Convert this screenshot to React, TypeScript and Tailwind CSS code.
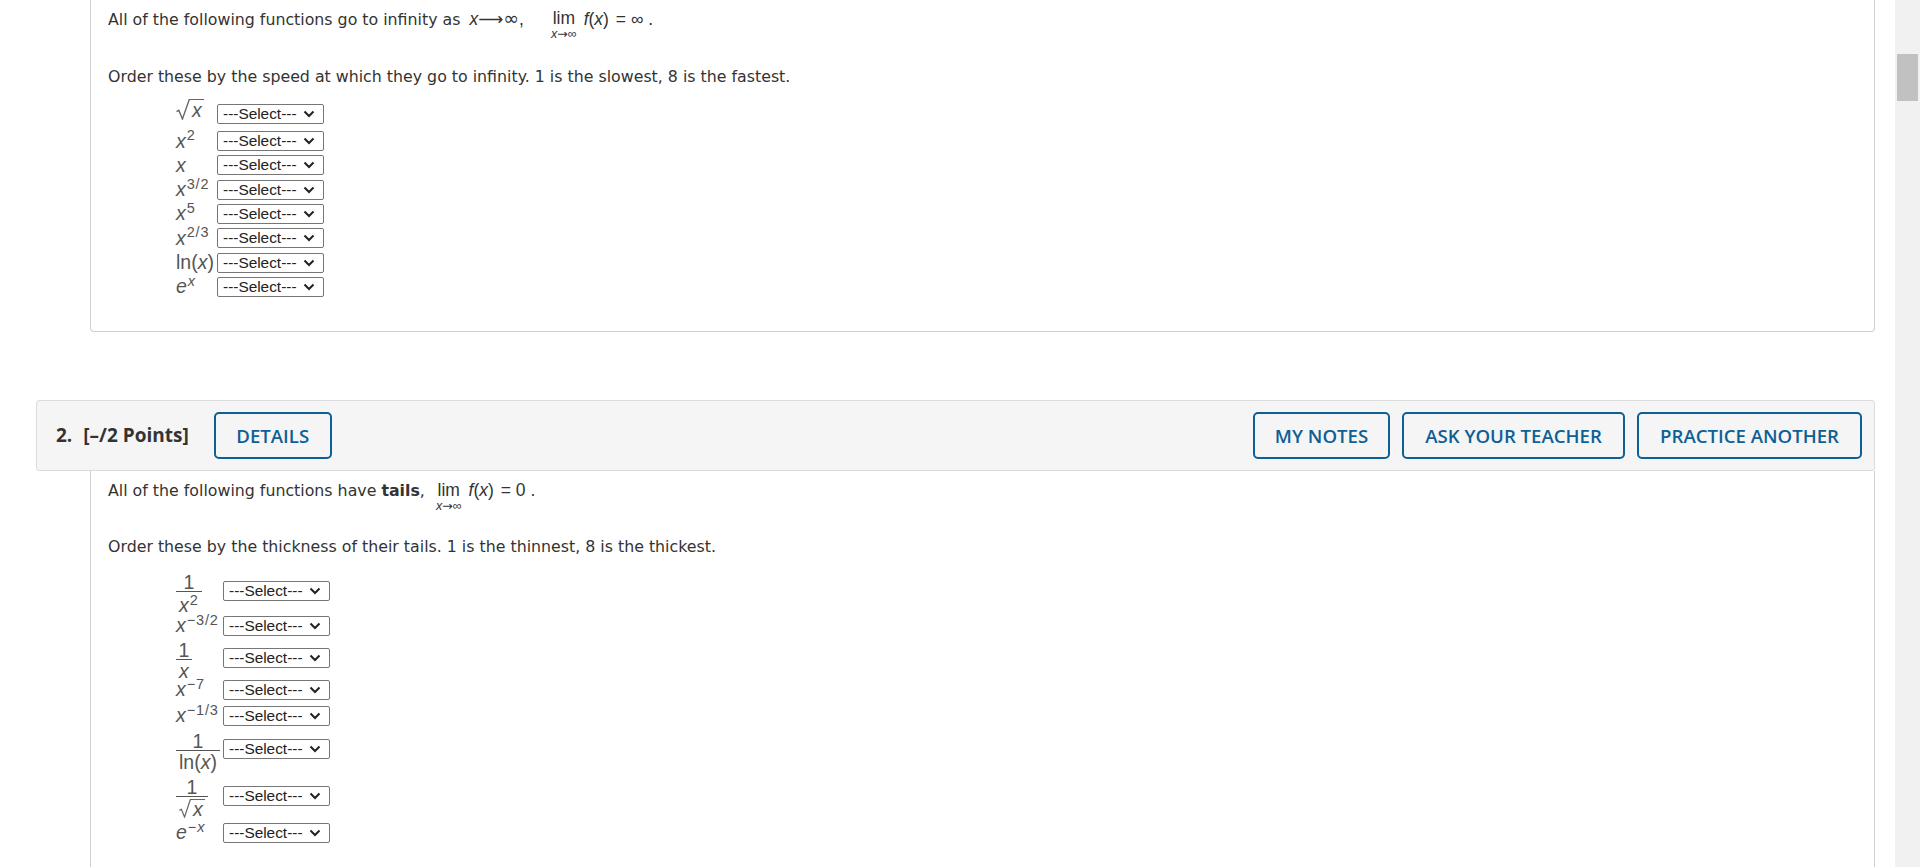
import React from 'react';

const MATH = "font-['Liberation_Sans',Arial,sans-serif]";

function Arrow({ long }: { long?: boolean }) {
  return <span className="font-['DejaVu_Sans',sans-serif]">{long ? '⟶' : '→'}</span>;
}

function Chevron() {
  return (
    <svg width="12" height="8" viewBox="0 0 12 8" className="pointer-events-none absolute right-[9px] top-[6px]">
      <path d="M1.5 1.5 L6 6 L10.5 1.5" fill="none" stroke="#222" strokeWidth="2" />
    </svg>
  );
}

function Pick() {
  return (
    <span className="relative inline-block">
      <select className="block h-[20px] w-[107px] appearance-none rounded-[2px] border border-[#767676] bg-white pl-[5px] text-[15.4px] leading-[18px] text-[#222] font-['Liberation_Sans',Arial,sans-serif]">
        <option>---Select---</option>
        {[1, 2, 3, 4, 5, 6, 7, 8].map((n) => (
          <option key={n}>{n}</option>
        ))}
      </select>
      <Chevron />
    </span>
  );
}

function Root({ small }: { small?: boolean }) {
  return (
    <span className="inline-flex items-stretch">
      <svg width={small ? 12 : 14} height={small ? 19 : 21} viewBox="0 0 13 20" preserveAspectRatio="none" className="shrink-0">
        <path d="M0.5 12 L2.6 10.8 L6 19 L12.3 0.6 L13 0.6" fill="none" stroke="#666" strokeWidth="1.3" />
      </svg>
      <span className={`border-t border-[#666] pl-[2px] pr-[2px] italic ${small ? 'leading-[18px]' : 'leading-[20px]'}`}>x</span>
    </span>
  );
}

function Sup({ children }: { children: React.ReactNode }) {
  return <sup className="ml-[1px] text-[14.5px] tracking-[0.8px]">{children}</sup>;
}

function Frac({ den, tall }: { den: React.ReactNode; tall?: boolean }) {
  return (
    <span className="inline-flex flex-col items-stretch text-center">
      <span className="leading-[17px]">1</span>
      <span className={`border-t border-[#555] px-[3px] leading-[18px] ${tall ? 'pt-[4px]' : 'pt-[2px]'}`}>{den}</span>
    </span>
  );
}

function Lim() {
  return (
    <span className={`mx-[7px] inline-flex flex-col items-center align-top ${MATH}`}>
      <span className="text-[17.5px] leading-[22px]">lim</span>
      <span className="-mt-[1px] text-[12.5px] leading-[12px]">
        <i>x</i>
        <Arrow />∞
      </span>
    </span>
  );
}

type Row = { label: React.ReactNode; h: string };

const growRows: Row[] = [
  { label: <Root />, h: 'h-[31px]' },
  { label: <><i>x</i><Sup>2</Sup></>, h: 'h-[24.3px]' },
  { label: <i>x</i>, h: 'h-[24.3px]' },
  { label: <><i>x</i><Sup>3/2</Sup></>, h: 'h-[24.3px]' },
  { label: <><i>x</i><Sup>5</Sup></>, h: 'h-[24.3px]' },
  { label: <><i>x</i><Sup>2/3</Sup></>, h: 'h-[24.3px]' },
  { label: <>ln(<i>x</i>)</>, h: 'h-[24.3px]' },
  { label: <><i>e</i><Sup><i>x</i></Sup></>, h: 'h-[24.3px]' },
];

const tailRows: Row[] = [
  { label: <Frac tall den={<><i>x</i><Sup>2</Sup></>} />, h: 'h-[42px]' },
  { label: <><i>x</i><Sup>−3/2</Sup></>, h: 'h-[28px]' },
  { label: <Frac den={<i>x</i>} />, h: 'h-[36px]' },
  { label: <><i>x</i><Sup>−7</Sup></>, h: 'h-[28px]' },
  { label: <><i>x</i><Sup>−1/3</Sup></>, h: 'h-[24px]' },
  { label: <Frac den={<>ln(<i>x</i>)</>} />, h: 'h-[42px]' },
  { label: <Frac den={<Root small />} />, h: 'h-[52px]' },
  { label: <><i>e</i><Sup>−<i>x</i></Sup></>, h: 'h-[22px]' },
];

function Rows({ rows, labelW }: { rows: Row[]; labelW: string }) {
  return (
    <div className="ml-[68px]">
      {rows.map((r, i) => (
        <div key={i} className={`flex items-center ${r.h}`}>
          <span className={`${labelW} shrink-0 whitespace-nowrap text-[19.5px] text-[#555] ${MATH}`}>{r.label}</span>
          <Pick />
        </div>
      ))}
    </div>
  );
}

function Btn({ children, w }: { children: React.ReactNode; w: string }) {
  return (
    <button className={`flex h-[47px] ${w} items-center justify-center rounded-[5px] border-2 border-[#0d5f96] text-[18.6px] font-semibold text-[#0d5f96]`}>
      {children}
    </button>
  );
}

export default function App() {
  return (
    <div className="flex h-[867px] w-full overflow-hidden bg-white">
      <div className="min-w-0 flex-1 pl-[36px] pr-[20px]">
        {/* question 1, scrolled so its top is out of view */}
        <div className="ml-[54px] rounded-b-[4px] border-x border-b border-[#cfcfcf] pb-[32px] pl-[17px] pt-[7px] text-[15.8px] text-[#333] font-['DejaVu_Sans',Verdana,sans-serif]">
          <p className="leading-[22px]">
            All of the following functions go to infinity as
            <span className={`ml-[9px] text-[17.5px] ${MATH}`}>
              <i>x</i>
              <Arrow long />
              <span className="font-['DejaVu_Sans',sans-serif] text-[19px]">∞</span>,
            </span>
            <span className="ml-[20px]" />
            <Lim />
            <span className={`text-[17.5px] ${MATH}`}>
              <i>f</i>(<i>x</i>) <span className="ml-[2px]">=</span> ∞ .
            </span>
          </p>
          <p className="mt-[26px] leading-[22px]">
            Order these by the speed at which they go to infinity. 1 is the slowest, 8 is the fastest.
          </p>
          <div className="mt-[10px]">
            <Rows rows={growRows} labelW="w-[41px]" />
          </div>
        </div>

        {/* question 2 header */}
        <div className="mt-[68px] flex h-[71px] items-center rounded-[3px] border border-[#dcdcdc] bg-[#f5f5f5] pl-[19px] pr-[12px] font-['Open_Sans',sans-serif]">
          <span className="text-[19px] font-bold text-[#333]">2.</span>
          <span className="ml-[11px] text-[19px] font-bold text-[#333]">[–/2 Points]</span>
          <div className="ml-[25px]">
            <Btn w="w-[118px]">DETAILS</Btn>
          </div>
          <div className="ml-auto flex gap-[12px]">
            <Btn w="w-[137px]">MY NOTES</Btn>
            <Btn w="w-[223px]">ASK YOUR TEACHER</Btn>
            <Btn w="w-[225px]">PRACTICE ANOTHER</Btn>
          </div>
        </div>

        <div className="ml-[54px] h-[420px] border-x border-[#cfcfcf] pl-[17px] pt-[8px] text-[15.8px] text-[#333] font-['DejaVu_Sans',Verdana,sans-serif]">
          <p className="leading-[22px]">
            All of the following functions have <b>tails</b>,
            <span className="ml-[4px]" />
            <Lim />
            <span className={`text-[17.5px] ${MATH}`}>
              <i>f</i>(<i>x</i>) <span className="ml-[2px]">=</span> 0 .
            </span>
          </p>
          <p className="mt-[24px] leading-[22px]">
            Order these by the thickness of their tails. 1 is the thinnest, 8 is the thickest.
          </p>
          <div className="mt-[12px]">
            <Rows rows={tailRows} labelW="w-[47px]" />
          </div>
        </div>
      </div>

      {/* scrollbar */}
      <div className="w-[25px] shrink-0 bg-[#f1f1f1] px-[2px] pt-[54px]">
        <div className="h-[47px] bg-[#c1c1c1]" />
      </div>
    </div>
  );
}
